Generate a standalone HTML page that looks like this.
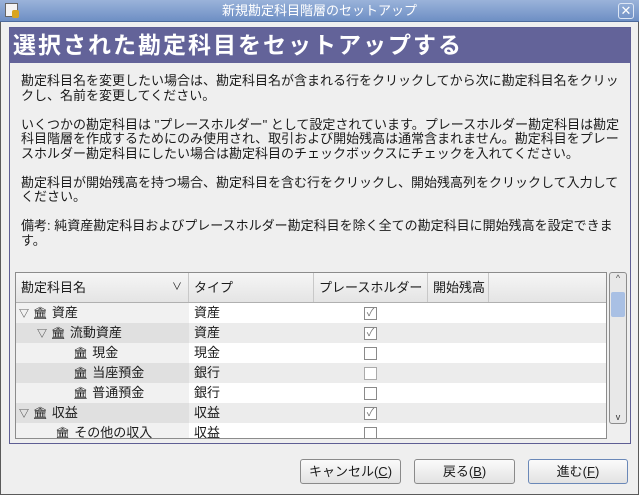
<!DOCTYPE html>
<html><head><meta charset="utf-8"><style>
*{box-sizing:border-box;margin:0;padding:0}
body{width:639px;height:495px;overflow:hidden;background:#efefef;font-family:"Liberation Sans","Noto Sans CJK JP",sans-serif;font-size:13px;color:#1a1a1a;position:relative}
.win{position:absolute;left:0;top:0;width:639px;height:495px;border:1px solid #5a5a5a;border-top:none}
.tb{position:absolute;left:0;top:0;width:639px;height:22px;background:linear-gradient(#9ab3da,#6e8fc4);border-bottom:1px solid #4d6a9c;color:#fff;text-align:center;font-size:13px;line-height:22px}
.ico{position:absolute;left:5px;top:3px;width:13px;height:14px;background:#f4f4f4;border:1px solid #666}
.ico:after{content:"";position:absolute;left:6px;top:6px;width:7px;height:8px;background:#d9a520;border-radius:2px}
.cls{position:absolute;right:5px;top:3px;width:16px;height:16px;border:1px solid #dde6f5;border-radius:3px;color:#fff;font-size:13px;line-height:14px;text-align:center}
.panel{position:absolute;left:9px;top:27px;width:622px;height:417px;border:1px solid #5e5e94}
.hd{position:absolute;left:0;top:0;width:620px;height:35px;background:#636399;color:#fff;font-size:23px;font-weight:bold;line-height:35px;padding-left:3px;letter-spacing:2px}
.txt{position:absolute;left:11px;top:46px;width:600px;line-height:14.5px;font-size:13px}
.txt p{margin-bottom:14.5px}
.tree{position:absolute;left:15px;top:272px;width:592px;height:167px;border:1px solid #8c8c8c;background:#fff;overflow:hidden}
.th{height:30px;background:linear-gradient(#f6f6f6,#e4e4e4);border-bottom:1px solid #b0b0b0;position:relative}
.th span{position:absolute;top:0;line-height:29px;padding-left:5px;border-right:1px solid #c8c8c8;height:29px}
.row{height:20px;position:relative;line-height:20px}
.row.alt{background:#ececec}
.row .n{position:absolute;left:0;top:0;width:173px;height:20px;background:#f1f1f1}
.row.alt .n{background:#e0e0e0}
.row .t{position:absolute;left:178px}
.cb{position:absolute;left:348px;top:4px;width:13px;height:13px;border:1px solid #8a8a8a;background:#fff;font-size:11px;line-height:11px;text-align:center;color:#777}
.bank{display:inline-block;font-size:12px;margin-right:4px}
.tri{display:inline-block;width:10px;font-size:10px;color:#333}
.sb{position:absolute;left:609px;top:272px;width:18px;height:152px;border:1px solid #8c8c8c;border-radius:3px;background:#e8e8e8}
.sb .th2{position:absolute;left:1px;top:19px;width:14px;height:25px;background:#a9c0e4;border-radius:2px}
.btn{position:absolute;top:459px;height:25px;border:1px solid #8a8a8a;border-radius:3px;background:linear-gradient(#fbfbfb,#e2e2e2);text-align:center;line-height:23px;font-size:13px}
</style></head><body>
<div class="win"></div>
<div class="tb"><div class="ico"></div>新規勘定科目階層のセットアップ<div class="cls">✕</div></div>
<div class="panel"><div class="hd">選択された勘定科目をセットアップする</div>
<div class="txt">
<p>勘定科目名を変更したい場合は、勘定科目名が含まれる行をクリックしてから次に勘定科目名をクリックし、名前を変更してください。</p>
<p>いくつかの勘定科目は "プレースホルダー" として設定されています。プレースホルダー勘定科目は勘定科目階層を作成するためにのみ使用され、取引および開始残高は通常含まれません。勘定科目をプレースホルダー勘定科目にしたい場合は勘定科目のチェックボックスにチェックを入れてください。</p>
<p>勘定科目が開始残高を持つ場合、勘定科目を含む行をクリックし、開始残高列をクリックして入力してください。</p>
<p>備考: 純資産勘定科目およびプレースホルダー勘定科目を除く全ての勘定科目に開始残高を設定できます。</p>
</div></div>
<div class="tree">
<div class="th"><span style="left:0;width:173px">勘定科目名<b style="position:absolute;right:6px;font-weight:normal;font-size:10px">∨</b></span><span style="left:173px;width:125px">タイプ</span><span style="left:298px;width:114px">プレースホルダー</span><span style="left:412px;width:61px">開始残高</span></div>
<div class="row"><div class="n"><span class="tri" style="margin-left:3px">▽</span> <span class="bank">🏛</span>資産</div><span class="t">資産</span><div class="cb">✓</div></div>
<div class="row alt"><div class="n"><span class="tri" style="margin-left:21px">▽</span> <span class="bank">🏛</span>流動資産</div><span class="t">資産</span><div class="cb">✓</div></div>
<div class="row"><div class="n"><span style="margin-left:57px" class="bank">🏛</span>現金</div><span class="t">現金</span><div class="cb"></div></div>
<div class="row alt"><div class="n"><span style="margin-left:57px" class="bank">🏛</span>当座預金</div><span class="t">銀行</span><div class="cb" style="border-color:#aaa"></div></div>
<div class="row"><div class="n"><span style="margin-left:57px" class="bank">🏛</span>普通預金</div><span class="t">銀行</span><div class="cb"></div></div>
<div class="row alt"><div class="n"><span class="tri" style="margin-left:3px">▽</span> <span class="bank">🏛</span>収益</div><span class="t">収益</span><div class="cb">✓</div></div>
<div class="row"><div class="n"><span style="margin-left:39px" class="bank">🏛</span>その他の収入</div><span class="t">収益</span><div class="cb"></div></div>
</div>
<div class="sb"><div style="text-align:center;font-size:9px;color:#555">^</div><div class="th2"></div><div style="position:absolute;bottom:1px;width:16px;text-align:center;font-size:9px;color:#333">v</div></div>
<div class="btn" style="left:300px;width:101px">キャンセル(<u>C</u>)</div>
<div class="btn" style="left:414px;width:101px">戻る(<u>B</u>)</div>
<div class="btn" style="left:528px;width:100px;border-color:#6a88b8">進む(<u>F</u>)</div>
</body></html>
